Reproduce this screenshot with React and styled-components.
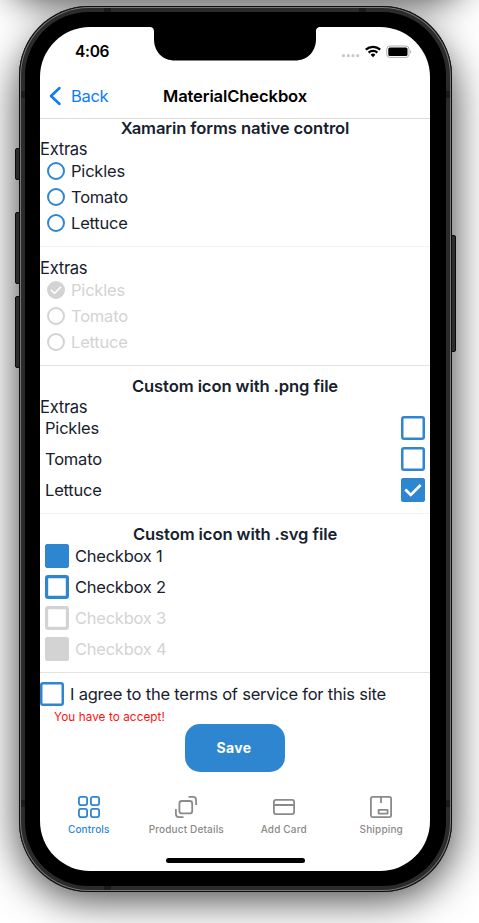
import React from "react";
import styled, { createGlobalStyle, css } from "styled-components";

const blue = "#2f86d0";
const ink = "#17212e";
const muted = "#d3d3d3";

const Global = createGlobalStyle`
  * { box-sizing: border-box; }
  body { margin: 0; background: #fff; font-family: Inter, "Liberation Sans", sans-serif; }
`;

const Stage = styled.main`
  position: relative;
  width: 479px;
  height: 923px;
  overflow: hidden;
  background: #fff;
  display: flex;
  padding: 6px 0 0 19px;
`;

const AmbientShadow = styled.div`
  position: absolute;
  left: 24px;
  top: ${(p) => p.$top};
  width: 424px;
  height: ${(p) => p.$height};
  border-radius: ${(p) => p.$radius};
  box-shadow: ${(p) => p.$shadow};
`;

const SideButton = styled.i`
  position: absolute;
  left: ${(p) => (p.$right ? "450px" : "15px")};
  top: ${(p) => p.$top}px;
  width: 6px;
  height: ${(p) => p.$height}px;
  background: #2b2c2c;
  border: 1px solid #0b0b0b;
  border-radius: 2px;
`;

const Phone = styled.div`
  position: relative;
  width: 433px;
  height: 886px;
  padding: 21px 22px 21px 21px;
  border-radius: 70px;
  background: #000;
  box-shadow: inset 0 0 0 1px #0c0c0c, inset 0 0 0 2px #777, inset 0 0 0 6px #2b2b2b;
`;

const Antenna = styled.i`
  position: absolute;
  background: #1b1b1b;
  ${(p) => (p.$side === "left" || p.$side === "right"
    ? css`width: 4px; height: 7px; ${p.$side}: 2px;`
    : css`width: 7px; height: 4px; ${p.$side}: 2px;`)}
  ${(p) => (p.$x !== undefined ? `left: ${p.$x}px;` : "")}
  ${(p) => (p.$y !== undefined ? `top: ${p.$y}px;` : "")}
`;

const Screen = styled.div`
  position: relative;
  width: 390px;
  height: 844px;
  border-radius: 50px;
  background: #fff;
  overflow: hidden;
  display: flex;
  flex-direction: column;
`;

const Notch = styled.svg`
  position: absolute;
  left: 109px;
  top: 0;
`;

const StatusBar = styled.div`
  height: 47px;
  display: flex;
  justify-content: space-between;
  padding: 16px 18px 0 35px;
`;

const Clock = styled.time`
  font: 600 15.5px/18px Inter, sans-serif;
  letter-spacing: -0.3px;
  color: #000;
`;

const NavBar = styled.header`
  height: 45px;
  border-bottom: 1px solid #dcdcdc;
  display: grid;
  grid-template-columns: 100px 190px 100px;
  align-items: center;
`;

const Back = styled.button`
  border: 0;
  background: none;
  padding: 0 0 0 9px;
  display: flex;
  align-items: center;
  gap: 9px;
  color: #0a7aff;
  font: 400 16.5px/20px Inter, sans-serif;
  letter-spacing: -0.3px;
`;

const Title = styled.h1`
  margin: 0;
  font: 600 16.6px/20px Inter, sans-serif;
  letter-spacing: -0.13px;
  text-align: center;
  color: #000;
`;

const Section = styled.section`
  height: ${(p) => p.$height}px;
  padding-top: ${(p) => p.$top || 0}px;
  border-bottom: 1px solid ${(p) => (p.$faint ? "#f2f2f2" : "#e2e2e2")};
`;

const Heading = styled.h2`
  margin: 0;
  font: 600 16.6px/20px Inter, sans-serif;
  letter-spacing: -0.1px;
  text-align: center;
  color: ${ink};
`;

const GroupLabel = styled.div`
  font: 400 16.6px/20px Inter, sans-serif;
  letter-spacing: -0.3px;
  color: ${ink};
  ${Heading} + & { margin-top: 1px; }
`;

const OptionList = styled.div`
  margin-top: ${(p) => p.$shift}px;
`;

const OptionRow = styled.label`
  display: flex;
  align-items: center;
  justify-content: ${(p) => (p.$spread ? "space-between" : "flex-start")};
  gap: ${(p) => p.$gap || 0}px;
  height: ${(p) => p.$height}px;
  padding: 0 5px 0 ${(p) => p.$left}px;
  font: 400 16.5px/20px Inter, sans-serif;
  letter-spacing: ${(p) => p.$tracking || -0.2}px;
  color: ${(p) => (p.$disabled ? muted : ink)};
`;

const Radio = styled.span`
  width: 18px;
  height: 18px;
  border-radius: 50%;
  border: 2px solid ${(p) => (p.$disabled ? muted : blue)};
  background: ${(p) => (p.$checked ? muted : "#fff")};
  display: grid;
  place-items: center;
  svg { display: block; }
`;

const Box = styled.span`
  width: 24px;
  height: 24px;
  border-radius: 3px;
  box-shadow: inset 0 0 0 ${(p) => p.$stroke || 3.2}px ${(p) => (p.$disabled ? muted : blue)};
  background: ${(p) => (p.$filled ? (p.$disabled ? muted : blue) : "#fff")};
  display: grid;
  place-items: center;
  svg { display: block; }
`;

const ErrorText = styled.p`
  margin: -5px 0 0;
  padding-left: 14px;
  font: 400 11.7px/16px Inter, sans-serif;
  letter-spacing: 0.1px;
  color: #ff1010;
`;

const Save = styled.button`
  align-self: center;
  width: 100px;
  height: 48px;
  margin-top: -1px;
  padding: 0 8px 0 6px;
  border: 0;
  border-radius: 15px;
  background: ${blue};
  color: #fff;
  font: 700 14px/20px Inter, sans-serif;
  letter-spacing: 0.4px;
`;

const TabBar = styled.nav`
  margin-top: 23px;
  display: grid;
  grid-template-columns: repeat(4, 1fr);
`;

const Tab = styled.a`
  display: flex;
  flex-direction: column;
  align-items: center;
  gap: 4px;
  color: ${(p) => (p.$active ? blue : "#8a8a8a")};
  font: 500 10px/13px Inter, sans-serif;
  letter-spacing: 0.16px;
  white-space: nowrap;
`;

const HomeIndicator = styled.div`
  align-self: center;
  width: 139px;
  height: 5px;
  margin: auto 0 8px;
  border-radius: 3px;
  background: #000;
`;

const Check = ({ size, width }) => (
  <svg width={size} height={size} viewBox="0 0 20 20" fill="none">
    <path d="m1.500 9.500 6 6L18.500 4.500" stroke="#fff" strokeWidth={width} />
  </svg>
);

const StatusIcons = () => (
  <svg width="72" height="16" viewBox="0 0 72 16">
    <g fill="#cacaca">
      <circle cx="3.5" cy="12.7" r="1.6" /><circle cx="8.3" cy="12.7" r="1.6" />
      <circle cx="13" cy="12.7" r="1.6" /><circle cx="17.7" cy="12.7" r="1.6" />
    </g>
    <g fill="none" stroke="#000" strokeWidth="2.2">
      <path d="M25.8 6.6a10.6 10.6 0 0 1 14.4 0" />
      <path d="M28.6 9.6a6.4 6.4 0 0 1 8.8 0" />
    </g>
    <path d="m33 14.2-2.4-2.5a3.5 3.5 0 0 1 4.8 0z" />
    <rect x="46.8" y="3" width="22.2" height="11.400" rx="3" fill="#fff" stroke="#b0b0b0" />
    <rect x="48.300" y="4.500" width="19.200" height="8.400" rx="1.5" />
    <path d="M70.2 7a2 2 0 0 1 0 3.5z" fill="#a6a6a6" />
  </svg>
);

const tabs = [
  ["Controls", <><rect x="1.900" y="1.900" width="8.200" height="8.200" rx="2" /><rect x="13.900" y="1.900" width="8.200" height="8.200" rx="2" /><rect x="1.900" y="13.900" width="8.200" height="8.200" rx="2" /><rect x="13.900" y="13.900" width="8.200" height="8.200" rx="2" /></>],
  ["Product Details", <><rect x="5.400" y="6" width="12.800" height="12.400" rx="2.5" /><path d="M14.500 1.900h4.600a3 3 0 0 1 3 3V10M1.900 14v5.100a3 3 0 0 0 3 3H9.500" /></>],
  ["Add Card", <><rect x="1.900" y="4.900" width="20.200" height="14.200" rx="2" /><path d="M2 10h20" /></>],
  ["Shipping", <><rect x="1.900" y="1.900" width="20.200" height="20.200" rx="1.800" /><path d="M12 2v6" /><rect x="9.600" y="14.800" width="9" height="3.800" rx=".3" /></>],
];

const names = ["Pickles", "Tomato", "Lettuce"];

export default function App() {
  return (
    <Stage>
      <Global />
      <AmbientShadow $top="-106px" $height="90px" $radius="20px" $shadow="0 0 38px 18px #000b" />
      <AmbientShadow $top="24px" $height="862px" $radius="66px" $shadow="0 8px 40px 6px #000b" />
      <SideButton $top={148} $height={32} />
      <SideButton $top={212} $height={72} />
      <SideButton $top={296} $height={72} />
      <SideButton $right $top={235} $height={117} />
      <Phone>
        <Antenna $side="top" $x={85} /><Antenna $side="top" $x={340} />
        <Antenna $side="left" $y={85} /><Antenna $side="right" $y={85} />
        <Antenna $side="left" $y={794} /><Antenna $side="right" $y={794} />
        <Antenna $side="bottom" $x={85} />
        <Screen>
          <Notch width="172" height="34" viewBox="0 0 172 34">
            <path d="M0 0c4 0 5 1.5 5 5v7c0 13 9 21.5 21 21.5h120c12 0 21-8.500 21-21.500V5c0-3.500 1-5 5-5z" />
          </Notch>
          <StatusBar><Clock>4:06</Clock><StatusIcons /></StatusBar>
          <NavBar>
            <Back>
              <svg width="13" height="20" viewBox="0 0 13 20" fill="none" stroke="currentColor" strokeWidth="2.5" strokeLinecap="round" strokeLinejoin="round"><path d="m10.500 2-8.500 8 8.500 8" /></svg>
              Back
            </Back>
            <Title>MaterialCheckbox</Title>
          </NavBar>
          <Section $height={128} $faint>
            <OptionList $shift={-1}>
              <Heading>Xamarin forms native control</Heading>
              <GroupLabel>Extras</GroupLabel>
              <OptionList $shift={-1}>
                {names.map((n) => <OptionRow key={n} $height={26} $left={7} $gap={6}><Radio />{n}</OptionRow>)}
              </OptionList>
            </OptionList>
          </Section>
          <Section $height={119} $top={11}>
            <GroupLabel>Extras</GroupLabel>
            <OptionList $shift={-1}>
              {names.map((n, i) => (
                <OptionRow key={n} $height={26} $left={7} $gap={6} $disabled>
                  <Radio $disabled $checked={i === 0}>{i === 0 && <Check size={12} width={2.6} />}</Radio>{n}
                </OptionRow>
              ))}
            </OptionList>
          </Section>
          <Section $height={148} $top={10} $faint>
            <Heading>Custom icon with .png file</Heading>
            <GroupLabel>Extras</GroupLabel>
            <OptionList $shift={-5}>
              {names.map((n, i) => (
                <OptionRow key={n} $height={31} $left={5} $spread>
                  {n}<Box $stroke={2.5} $filled={i === 2}>{i === 2 && <Check size={18} width={3} />}</Box>
                </OptionRow>
              ))}
            </OptionList>
          </Section>
          <Section $height={159} $top={10}>
            <Heading>Custom icon with .svg file</Heading>
            <OptionList $shift={-4}>
              {[1, 2, 3, 4].map((n) => (
                <OptionRow key={n} $height={31} $left={5} $gap={6} $tracking={-0.25} $disabled={n > 2}>
                  <Box $disabled={n > 2} $filled={n === 1 || n === 4} />Checkbox {n}
                </OptionRow>
              ))}
            </OptionList>
          </Section>
          <OptionRow $height={41} $left={0} $gap={6} $tracking={-0.21}>
            <Box $stroke={2.5} />I agree to the terms of service for this site
          </OptionRow>
          <ErrorText>You have to accept!</ErrorText>
          <Save>Save</Save>
          <TabBar>
            {tabs.map(([label, icon], i) => (
              <Tab key={label} $active={i === 0}>
                <svg width="24" height="24" viewBox="0 0 24 24" fill="none" stroke="currentColor" strokeWidth="1.8">{icon}</svg>
                {label}
              </Tab>
            ))}
          </TabBar>
          <HomeIndicator />
        </Screen>
      </Phone>
    </Stage>
  );
}
